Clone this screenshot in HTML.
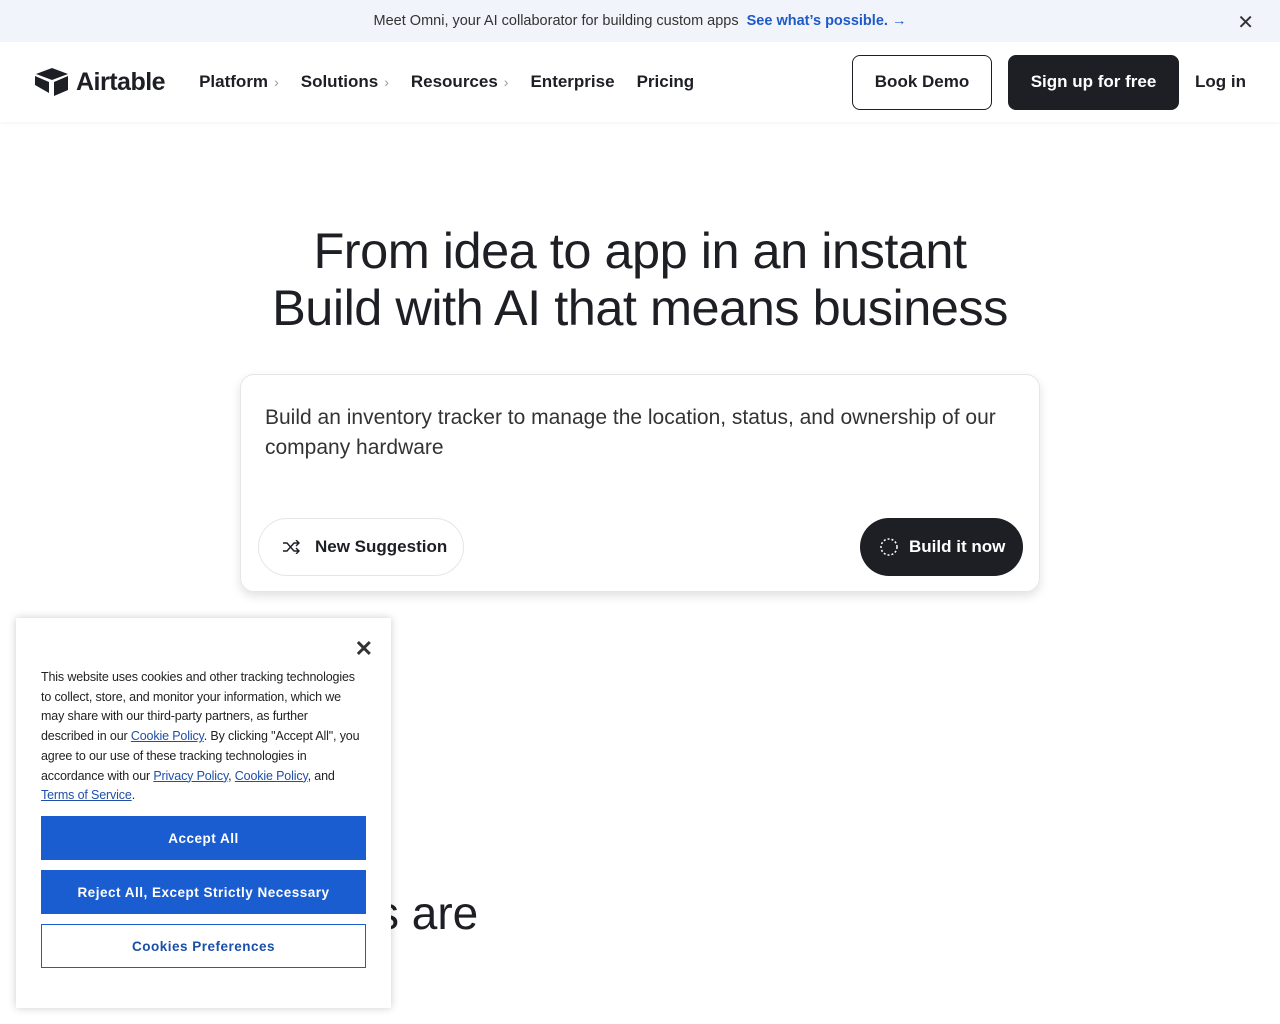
<!DOCTYPE html>
<html><head><meta charset="utf-8"><style>
*{box-sizing:border-box;margin:0;padding:0}
body{width:1280px;height:1024px;overflow:hidden;background:#fff;font-family:"Liberation Sans",sans-serif;color:#1d1f25;position:relative}
.banner{height:42px;background:#f1f4fb;display:flex;align-items:center;justify-content:center;font-size:14.5px;color:#333}
.banner b{color:#1f5ac6;margin-left:8px;font-weight:bold}
.banner .x{position:absolute;right:26px;top:10px;font-size:20px;color:#333}
.nav{height:80px;display:flex;align-items:center;padding:0 34px;box-shadow:0 2px 4px rgba(0,0,0,.04)}
.logo{display:flex;align-items:center;font-size:25px;font-weight:bold;letter-spacing:-.5px;margin-right:34px}
.nav a{font-size:17px;font-weight:bold;color:#1d1f25;margin-right:22px;white-space:nowrap}
.nav a span{color:#999;font-weight:normal;margin-left:6px;font-size:14px}
.right{margin-left:auto;display:flex;align-items:center}
.btn{height:55px;border-radius:8px;display:flex;align-items:center;font-size:17px;font-weight:bold;white-space:nowrap}
h1{text-align:center;font-weight:normal;font-size:50.5px;line-height:57px;margin-top:100px;color:#1d1f25;letter-spacing:-.5px}
.card{position:absolute;left:240px;top:374px;width:800px;height:218px;border:1px solid #e6e6e6;border-radius:14px;box-shadow:0 4px 10px rgba(0,0,0,.12)}
.card p{position:absolute;left:24px;top:28px;font-size:21px;line-height:30px;color:#333;width:750px}
.ns{position:absolute;left:17px;top:143px;width:206px;height:58px;border:1px solid #e6e6e6;border-radius:29px;display:flex;align-items:center;padding-left:23px;font-size:17px;font-weight:bold}
.bn{position:absolute;right:16px;top:143px;width:163px;height:58px;background:#1d1f25;color:#fff;border-radius:29px;display:flex;align-items:center;padding-left:19px;font-size:17px;font-weight:bold}
.are{position:absolute;left:376px;top:886px;font-size:46px;color:#1d1f25}
.ck{position:absolute;left:16px;top:618px;width:375px;height:390px;background:#fff;box-shadow:0 0 8px rgba(0,0,0,.2)}
.ck .cx{position:absolute;right:18px;top:18px;font-size:22px;font-weight:bold;color:#333}
.ck p{position:absolute;left:25px;top:50px;width:322px;font-size:12.5px;line-height:19.7px;color:#222;letter-spacing:-.15px}
.ck p u{color:#1f4fa8}
.cb{position:absolute;left:25px;width:325px;height:44px;display:flex;align-items:center;justify-content:center;font-size:13.5px;font-weight:bold;letter-spacing:.5px}
</style></head><body>
<div class="banner">Meet Omni, your AI collaborator for building custom apps <b>See what’s possible. →</b><span class="x">✕</span></div>
<div class="nav">
<div class="logo"><svg width="36" height="30" viewBox="0 0 36 30"><path d="M18 1 L34 7 L18 13 L2 7Z" fill="#1d1f25"/><path d="M20 15 L34 9 V23 L20 29Z" fill="#1d1f25"/><path d="M1 9 L15 15 V26 L1 18Z" fill="#1d1f25"/></svg><span style="margin-left:6px">Airtable</span></div>
<a>Platform<span>›</span></a><a>Solutions<span>›</span></a><a>Resources<span>›</span></a><a>Enterprise</a><a>Pricing</a>
<div class="right"><div class="btn" style="border:1px solid #1d1f25;width:140px;justify-content:center">Book Demo</div><div class="btn" style="background:#1d1f25;color:#fff;margin-left:16px;width:171px;justify-content:center">Sign up for free</div><div style="font-size:17px;font-weight:bold;margin-left:16px">Log in</div></div>
</div>
<h1>From idea to app in an instant<br>Build with AI that means business</h1>
<div class="card"><p>Build an inventory tracker to manage the location, status, and ownership of our company hardware</p>
<div class="ns"><svg width="18" height="14" viewBox="0 0 18 14" style="margin-right:15px"><path d="M1 3h4l7 8h5M1 11h4l7-8h5M14 0l3 3-3 3M14 8l3 3-3 3" fill="none" stroke="#1d1f25" stroke-width="1.4"/></svg>New Suggestion</div>
<div class="bn"><svg width="20" height="20" viewBox="0 0 20 20" style="margin-right:10px"><circle cx="10" cy="10" r="8" fill="none" stroke="#fff" stroke-width="1.5" stroke-dasharray="2 2"/></svg>Build it now</div></div>
<div class="are">s are</div>
<div class="ck"><span class="cx">✕</span>
<p>This website uses cookies and other tracking technologies to collect, store, and monitor your information, which we may share with our third-party partners, as further described in our <u>Cookie Policy</u>. By clicking "Accept All", you agree to our use of these tracking technologies in accordance with our <u>Privacy Policy</u>, <u>Cookie Policy</u>, and <u>Terms of Service</u>.</p>
<div class="cb" style="top:198px;background:#1a5dd0;color:#fff">Accept All</div>
<div class="cb" style="top:252px;background:#1a5dd0;color:#fff">Reject All, Except Strictly Necessary</div>
<div class="cb" style="top:306px;border:1px solid #1a5dd0;color:#1a4fa8">Cookies Preferences</div>
</div>
</body></html>
